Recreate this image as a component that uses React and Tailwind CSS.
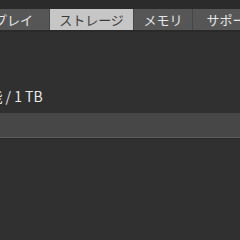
export default function App() {
  const tabs = [
    { label: 'ディスプレイ', w: 'w-[110px] -ml-[60px]', active: false },
    { label: 'ストレージ', w: 'w-[84px]', active: true },
    { label: 'メモリ', w: 'w-[59px]', active: false },
    { label: 'サポート', w: 'w-[80px]', active: false },
  ]

  return (
    <div
      className="w-[240px] h-[240px] overflow-hidden bg-[#303031] flex flex-col"
      style={{ fontFamily: '"Noto Sans CJK JP", "Liberation Sans", sans-serif' }}
    >
      {/* window top strip */}
      <div className="h-[9px] bg-[#2b2b2b] shrink-0" />

      {/* segmented tab bar */}
      <div className="h-[21px] bg-[#565656] flex shrink-0 whitespace-nowrap">
        {tabs.map((t) => (
          <div
            key={t.label}
            className={`${t.w} shrink-0 flex items-center justify-center text-[13px] leading-none border-r border-[#464646] ${
              t.active ? 'bg-[#c6c6c6] text-[#3c3c3c]' : 'text-[#e6e6e6]'
            }`}
          >
            {t.label}
          </div>
        ))}
      </div>
      <div className="h-[2px] bg-[#2a2a2a] shrink-0" />

      {/* storage summary */}
      <div className="h-[54px] shrink-0" />
      <div className="h-[20px] flex items-center whitespace-nowrap shrink-0">
        <span className="-ml-[102px] text-[14px] leading-none text-[#e8e8e8]">
          480 GB 使用可能 / 1 TB
        </span>
      </div>
      <div className="h-[7px] shrink-0" />

      {/* usage bar */}
      <div className="h-[25px] bg-[#474747] border-b border-[#5e5e5e] shrink-0" />
      <div className="h-[1px] bg-[#292929] shrink-0" />
    </div>
  )
}
